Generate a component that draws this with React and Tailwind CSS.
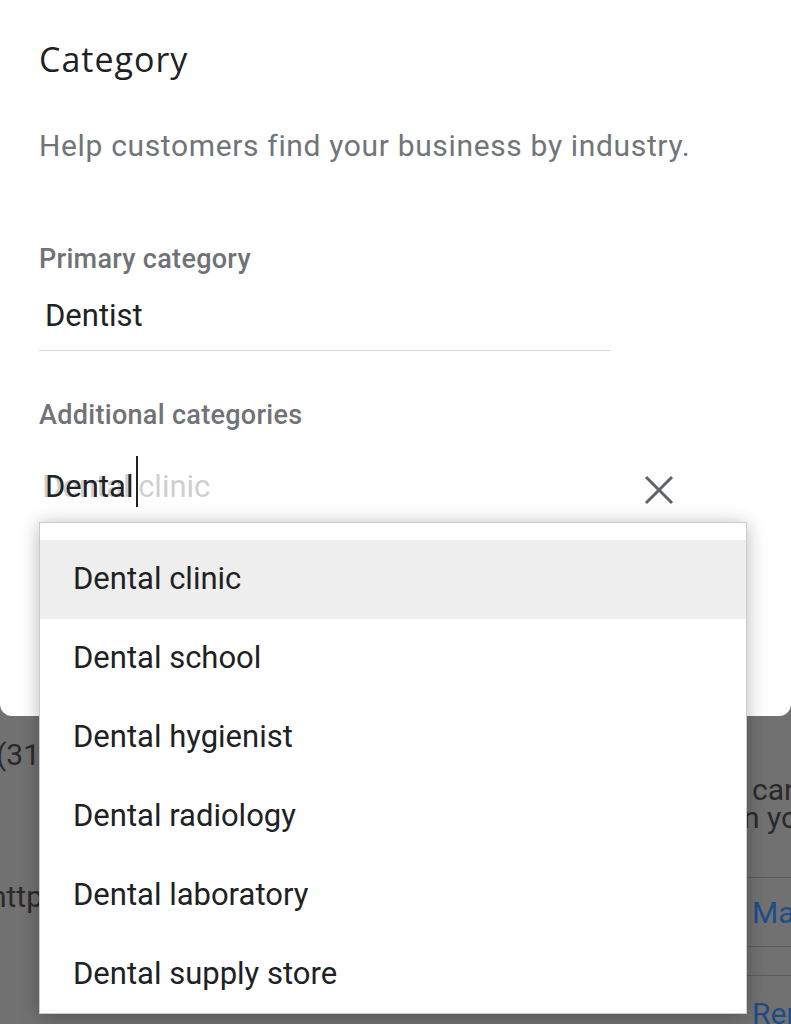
import React from "react";

const items = [
  "Dental clinic",
  "Dental school",
  "Dental hygienist",
  "Dental radiology",
  "Dental laboratory",
  "Dental supply store",
];

export default function App() {
  return (
    <div
      className="relative w-[791px] h-[1024px] overflow-hidden bg-[#717171] flex flex-col"
      style={{ fontFamily: "Roboto, 'Liberation Sans', sans-serif" }}
    >
      {/* Dialog */}
      <div className="h-[716px] shrink-0 bg-white rounded-b-[12px] pl-[39px] pt-[39px] relative z-10">
        <div
          className="text-[34px] leading-[40px] tracking-[1px] text-[#202124]"
          style={{ fontFamily: "'Open Sans', Roboto, sans-serif" }}
        >
          Category
        </div>
        <div className="mt-[49px] text-[30px] leading-[36px] tracking-[0.65px] text-[#70757a]">
          Help customers find your business by industry.
        </div>
        <div className="mt-[79px] text-[27px] leading-[32px] tracking-[0.3px] font-medium text-[#6f7378]">
          Primary category
        </div>
        <div className="mt-[21px] w-[571px] pb-[14px] border-b border-[#d3d5d8]">
          <div className="pl-[6px] text-[31px] leading-[40px] text-[#202124]">Dentist</div>
        </div>
        <div className="mt-[48px] text-[27px] leading-[32px] tracking-[0.3px] font-medium text-[#6f7378]">
          Additional categories
        </div>
        <div className="mt-[36px] w-[650px] flex items-start justify-between">
          <div className="pl-[6px] flex items-start text-[31px] leading-[40px]">
            <span className="relative">
              <span className="absolute left-[-3px] top-0 text-[#cfcfcf] whitespace-pre">Dental clinic</span>
              <span className="relative text-[#202124]">Dental</span>
            </span>
            <span className="relative ml-[3px] mt-[-11px] w-[1.5px] h-[51px] bg-[#202124]" />
          </div>
          <svg
            width="30"
            height="30"
            viewBox="0 0 30 30"
            className="mr-[15px] mt-[8px]"
          >
            <path d="M2 2 L28 28 M28 2 L2 28" stroke="#5f6368" strokeWidth="3" fill="none" />
          </svg>
        </div>
      </div>

      {/* Dimmed background page */}
      <div className="flex-1 flex justify-between text-[30px] leading-[28px] text-[#2a2a2a]">
        <div className="pt-[25px]">
          <div className="ml-[-4px]">(310</div>
          <div className="ml-[-10px] mt-[114px]">http</div>
        </div>
        <div className="w-[44px] pt-[60px] pl-[5px] overflow-hidden whitespace-nowrap">
          <div>can</div>
          <div className="ml-[-9px]">n you</div>
          <div className="mt-[45px] border-t border-[#5c5c5c] ml-[-5px]" />
          <div className="mt-[21px] text-[#1d4c8a]">Manage</div>
          <div className="mt-[19px] border-t border-[#5c5c5c] ml-[-5px]" />
          <div className="mt-[28px] border-t border-[#5c5c5c] ml-[-5px]" />
          <div className="mt-[24px] text-[#1d4c8a]">Remove</div>
        </div>
      </div>

      {/* Autocomplete dropdown */}
      <div className="absolute left-[39px] top-[522px] w-[708px] h-[492px] z-20 bg-white border border-[#cbcbcb] shadow-[0_2px_18px_rgba(0,0,0,0.28)] pt-[17px] overflow-hidden">
        {items.map((it, i) => (
          <div
            key={it}
            className={
              "h-[79px] flex items-center pl-[33px] text-[31px] text-[#202124] " +
              (i === 0 ? "bg-[#eeeeee]" : "")
            }
          >
            {it}
          </div>
        ))}
      </div>
    </div>
  );
}
